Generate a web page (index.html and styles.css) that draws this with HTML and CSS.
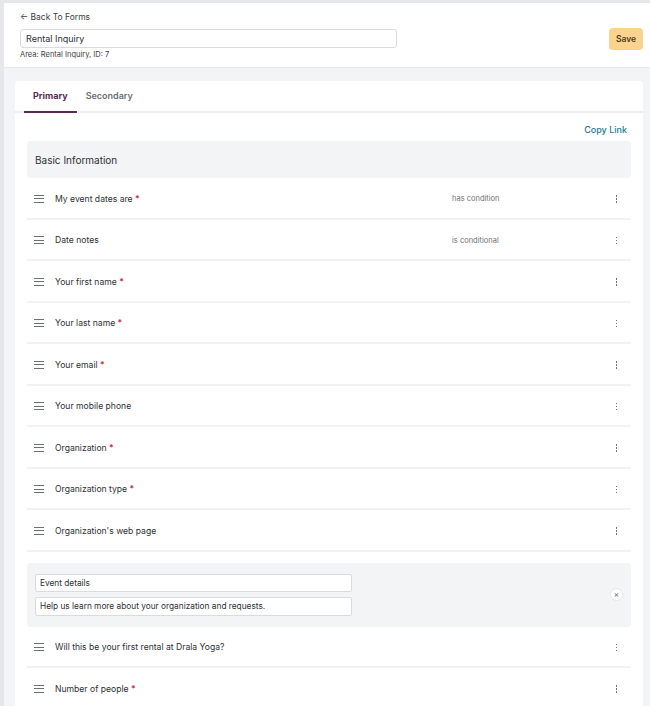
FILE: index.html
```html
<!DOCTYPE html>
<html lang="en">
<head>
    <meta charset="UTF-8">
    <meta name="viewport" content="width=device-width, initial-scale=1.0">
    <title>Rental Inquiry - Form</title>
    <link rel="stylesheet" href="styles.css">
</head>
<body>
    <div class="page">
        <header class="form-header">
            <div class="header-left">
                <a href="#" class="back-link">&larr; Back To Forms</a>
                <input type="text" class="title-input" value="Rental Inquiry">
                <p class="meta">Area: Rental Inquiry, ID: 7</p>
            </div>
            <button class="save-btn">Save</button>
        </header>

        <main class="main">
            <div class="card">
                <ul class="tabs">
                    <li class="tab active">Primary</li>
                    <li class="tab">Secondary</li>
                </ul>

                <div class="card-body">
                    <div class="copy-row"><a href="#" class="copy-link">Copy Link</a></div>

                    <div class="section-head">Basic Information</div>

                    <div class="field-row">
                        <span class="drag"><i></i><i></i><i></i></span>
                        <span class="label">My event dates are <b class="req">*</b></span>
                        <span class="cond">has condition</span>
                        <span class="kebab"><i></i><i></i><i></i></span>
                    </div>
                    <div class="field-row">
                        <span class="drag"><i></i><i></i><i></i></span>
                        <span class="label">Date notes</span>
                        <span class="cond">is conditional</span>
                        <span class="kebab"><i></i><i></i><i></i></span>
                    </div>
                    <div class="field-row">
                        <span class="drag"><i></i><i></i><i></i></span>
                        <span class="label">Your first name <b class="req">*</b></span>
                        <span class="cond"></span>
                        <span class="kebab"><i></i><i></i><i></i></span>
                    </div>
                    <div class="field-row">
                        <span class="drag"><i></i><i></i><i></i></span>
                        <span class="label">Your last name <b class="req">*</b></span>
                        <span class="cond"></span>
                        <span class="kebab"><i></i><i></i><i></i></span>
                    </div>
                    <div class="field-row">
                        <span class="drag"><i></i><i></i><i></i></span>
                        <span class="label">Your email <b class="req">*</b></span>
                        <span class="cond"></span>
                        <span class="kebab"><i></i><i></i><i></i></span>
                    </div>
                    <div class="field-row">
                        <span class="drag"><i></i><i></i><i></i></span>
                        <span class="label">Your mobile phone</span>
                        <span class="cond"></span>
                        <span class="kebab"><i></i><i></i><i></i></span>
                    </div>
                    <div class="field-row">
                        <span class="drag"><i></i><i></i><i></i></span>
                        <span class="label">Organization <b class="req">*</b></span>
                        <span class="cond"></span>
                        <span class="kebab"><i></i><i></i><i></i></span>
                    </div>
                    <div class="field-row">
                        <span class="drag"><i></i><i></i><i></i></span>
                        <span class="label">Organization type <b class="req">*</b></span>
                        <span class="cond"></span>
                        <span class="kebab"><i></i><i></i><i></i></span>
                    </div>
                    <div class="field-row">
                        <span class="drag"><i></i><i></i><i></i></span>
                        <span class="label">Organization's web page</span>
                        <span class="cond"></span>
                        <span class="kebab"><i></i><i></i><i></i></span>
                    </div>

                    <div class="section-edit">
                        <div class="section-inputs">
                            <input type="text" class="small-input" value="Event details">
                            <input type="text" class="small-input" value="Help us learn more about your organization and requests.">
                        </div>
                        <span class="remove">&times;</span>
                    </div>

                    <div class="field-row">
                        <span class="drag"><i></i><i></i><i></i></span>
                        <span class="label">Will this be your first rental at Drala Yoga?</span>
                        <span class="cond"></span>
                        <span class="kebab"><i></i><i></i><i></i></span>
                    </div>
                    <div class="field-row">
                        <span class="drag"><i></i><i></i><i></i></span>
                        <span class="label">Number of people <b class="req">*</b></span>
                        <span class="cond"></span>
                        <span class="kebab"><i></i><i></i><i></i></span>
                    </div>
                </div>
            </div>
        </main>
    </div>
</body>
</html>
```

FILE: styles.css
```css
:root {
    --page-bg: #f3f4f6;
    --border: #e5e7eb;
    --text: #2d2f33;
    --muted: #6b6f76;
    --purple: #5a2a55;
    --teal: #1d7898;
    --save: #fbd38d;
}

* {
    margin: 0;
    padding: 0;
    box-sizing: border-box;
}

body {
    font-family: 'Inter', 'Liberation Sans', sans-serif;
    background-color: #e6e7ea;
    color: var(--text);
    padding: 3px 0 0 4px;
}

.page {
    background-color: var(--page-bg);
    min-height: 703px;
}

.form-header {
    background-color: white;
    border-bottom: 1px solid var(--border);
    display: flex;
    justify-content: space-between;
    align-items: flex-start;
    padding: 9px 7px 8px 16px;
    height: 65px;
}

.header-left {
    display: flex;
    flex-direction: column;
}

.back-link {
    font-size: 8.5px;
    color: #3a3d42;
    text-decoration: none;
    line-height: 11px;
    margin-bottom: 6px;
}

.title-input {
    width: 377px;
    height: 19px;
    border: 1px solid #d9dbe0;
    border-radius: 3px;
    padding: 0 5px;
    font-family: inherit;
    font-size: 9px;
    color: #2d2f33;
}

.meta {
    font-size: 7.5px;
    color: #3a3d42;
    margin-top: 2px;
}

.save-btn {
    margin-top: 16px;
    width: 34px;
    height: 22px;
    border: none;
    border-radius: 4px;
    background-color: var(--save);
    color: #4b3b1c;
    font-family: inherit;
    font-size: 8.5px;
    font-weight: 600;
}

.main {
    padding: 13px 7px 0 11px;
}

.card {
    background-color: white;
    border-radius: 4px 4px 0 0;
}

.tabs {
    list-style: none;
    display: flex;
    padding: 0 9px;
    border-bottom: 2px solid #eceef1;
    height: 32px;
}

.tab {
    padding: 0 9px;
    font-size: 9px;
    font-weight: 600;
    color: #6b6f76;
    line-height: 29px;
    margin-bottom: -2px;
    border-bottom: 2px solid transparent;
}

.tab.active {
    color: var(--purple);
    font-weight: 700;
    border-bottom-color: var(--purple);
}

.card-body {
    padding: 11px 12px 0 12px;
}

.copy-row {
    display: flex;
    justify-content: flex-end;
    padding-right: 4px;
    height: 17px;
}

.copy-link {
    font-size: 9px;
    font-weight: 500;
    color: var(--teal);
    text-decoration: none;
}

.section-head {
    background-color: var(--page-bg);
    border-radius: 4px;
    height: 37px;
    display: flex;
    align-items: center;
    padding-left: 8px;
    font-size: 10px;
    color: #2d2f33;
}

.field-row {
    display: flex;
    align-items: center;
    height: 41.5px;
    border-bottom: 2px solid #f1f2f4;
    padding: 2px 13px 0 7px;
}

.drag {
    width: 10px;
    display: flex;
    flex-direction: column;
    gap: 2.5px;
    margin-right: 11px;
}

.drag i {
    display: block;
    height: 1px;
    background-color: #6b6f76;
}

.label {
    font-size: 8.6px;
    color: #2d2f33;
    flex: 1;
}

.req {
    color: #c81e3a;
    font-weight: 600;
}

.cond {
    width: 164px;
    font-size: 7.5px;
    color: var(--muted);
}

.kebab {
    display: flex;
    flex-direction: column;
    gap: 1.5px;
    width: 2px;
}

.kebab i {
    display: block;
    width: 1px;
    height: 1.5px;
    background-color: #6e7176;
}

.section-edit {
    margin-top: 11px;
    background-color: var(--page-bg);
    border-radius: 4px;
    padding: 11px 9px 11px 8px;
    display: flex;
    align-items: center;
    justify-content: space-between;
}

.section-inputs {
    display: flex;
    flex-direction: column;
    gap: 5px;
}

.small-input {
    width: 317px;
    height: 18.5px;
    border: 1px solid #d9dbe0;
    border-radius: 2px;
    padding: 0 4px;
    font-family: inherit;
    font-size: 8.3px;
    color: #2d2f33;
    background-color: white;
}

.remove {
    width: 11px;
    height: 11px;
    border-radius: 50%;
    background-color: white;
    box-shadow: 0 0 0 1px #e6e8eb;
    font-size: 8px;
    line-height: 11px;
    text-align: center;
    color: #666;
}
```
